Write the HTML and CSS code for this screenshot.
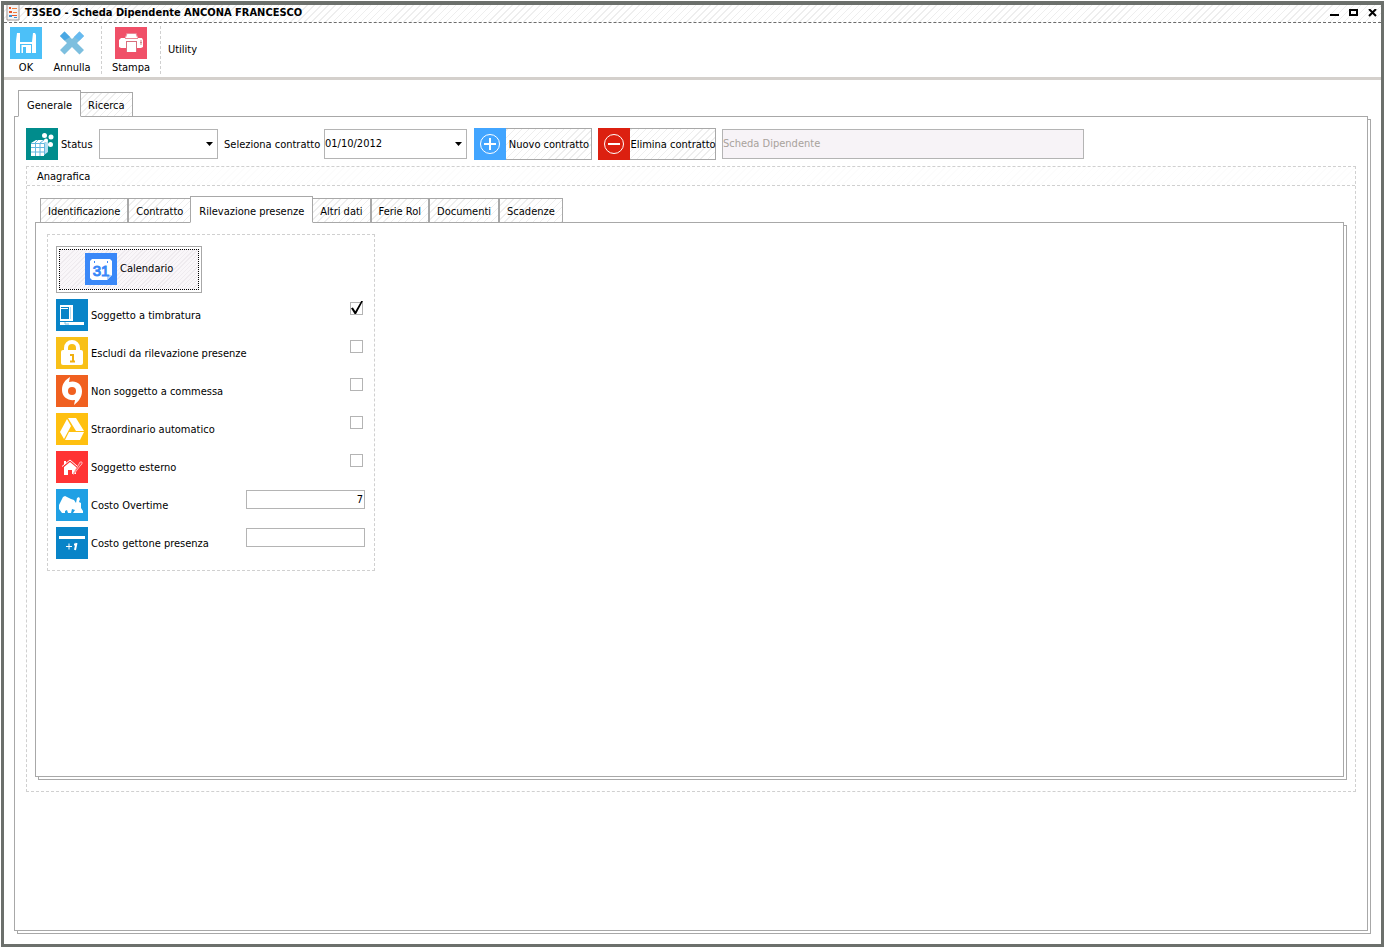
FILE: index.html
```html
<!DOCTYPE html>
<html lang="it">
<head>
<meta charset="utf-8">
<title>T3SEO - Scheda Dipendente</title>
<link rel="stylesheet" href="styles.css">
</head>
<body>
<div class="window">
  <header class="titlebar stripes">
    <svg class="app-icon" width="14" height="16" viewBox="0 0 14 16"><path d="M2 0h10v14H2z" fill="#f4f4f4"/><path d="M1 0v15M13 0v15M1 15h12" stroke="#9d9390" fill="none"/><path d="M3 2h2v2H3zM3 6h3v2H3z" fill="#e8562a"/><path d="M3 10h3v2H3zM8 12h3v1H8z" fill="#3f8fd0"/><path d="M6 3.500h5M7 7.500h4" stroke="#f08040"/><path d="M6 10.500h5" stroke="#e8562a"/></svg>
    <h1 class="title">T3SEO - Scheda Dipendente ANCONA FRANCESCO</h1>
    <button class="win-btn" aria-label="Riduci"><svg width="9" height="8" viewBox="0 0 9 8"><path d="M0 5h9v2H0z"/></svg></button>
    <button class="win-btn" aria-label="Ingrandisci"><svg width="9" height="8" viewBox="0 0 9 8"><path d="M1 1h7v5H1z" fill="none" stroke="#000" stroke-width="2"/></svg></button>
    <button class="win-btn" aria-label="Chiudi"><svg width="9" height="8" viewBox="0 0 9 8"><path d="M1 0l7 7M8 0L1 7" fill="none" stroke="#000" stroke-width="2"/></svg></button>
  </header>

  <nav class="toolbar">
    <button class="tool tool-ok">
      <svg width="32" height="32" viewBox="0 0 32 32"><path fill="#4cc0f8" d="M0 0h32v32H0z"/><path fill="#fff" d="M7 6h3v9h12l1-9h2l1 2v18h-4v-9H10v9H6V14z"/><path fill="#fff" d="M12 18h9v8h-9z"/><path fill="#4cc0f8" d="M13 20h3v6h-3z"/><path fill="#fff" d="M11 18h1v8h-1z" opacity=".5"/></svg>
      OK
    </button>
    <button class="tool">
      <svg width="32" height="32" viewBox="0 0 32 32"><path d="M8.500 4.500l7.500 7.500 7.500-7.500 4.500 4.500-7 7 7 7-4.500 4.500-7.500-7.500-7.500 7.500L4 23l7-7-7-7z" fill="#7dbfdf"/><path d="M8.500 4.500l5.500 5.500-5.500 3.500L4 9z" fill="#4aa8e4"/><path d="M18 10l5.500-5.500L28 9l-4.500 4.500z" fill="#66baf0"/></svg>
      Annulla
    </button>
    <span class="sep"></span>
    <button class="tool">
      <svg width="32" height="32" viewBox="0 0 32 32"><path fill="#f05068" d="M0 0h32v32H0z"/><path fill="#fff" d="M12 6h9l2 5H10zM4 13l2-2h21l1 2v7l-2 1H6l-2-1z"/><path d="M10.500 10.500l1.500-4h9l1.500 4M10 11.500h13" fill="none" stroke="#e88a98"/><path fill="#d8707e" d="M11 14h11v11H11z"/><path fill="#fff" d="M12 15h9v10h-9z"/><path d="M26 13v5M25 15.500h2" stroke="#c88"/></svg>
      Stampa
    </button>
    <span class="sep"></span>
    <button class="tool-text">Utility</button>
  </nav>

  <main class="main">
    <div class="tabs" role="tablist">
      <button class="tab active" role="tab" aria-selected="true">Generale</button>
      <button class="tab stripes" role="tab">Ricerca</button>
    </div>
    <section class="panel panel-outer">
      <div class="filters">
        <svg width="32" height="32" viewBox="0 0 32 32"><path fill="#008c8c" d="M0 0h32v32H0z"/><path fill="#fff" d="M5 15l5-3h10l2 1-4 3v12H5z"/><path fill="#b4def2" d="M18 16l3-4 1 2v10l-4 3z"/><path d="M5 19.500h13M5 24h13M9.500 16v12M14 16v12M18.500 16v11M5 15.500h13l4-3M9 15l3-3M14 15l4-3" stroke="#64b8e0" fill="none"/><g fill="#fff"><circle cx="18.500" cy="7.500" r="2.500"/><circle cx="25" cy="9" r="2.500"/><circle cx="24.500" cy="16.500" r="2.500"/><circle cx="20" cy="12.500" r="2"/></g></svg>
        <label class="status-label" for="status">Status</label>
        <span class="combo combo-status"><select id="status"><option></option></select><svg width="7" height="4" viewBox="0 0 7 4"><path d="M0 0h7L3.500 4z"/></svg></span>
        <label class="contract-label" for="contratto">Seleziona contratto</label>
        <span class="combo combo-contract"><select id="contratto"><option>01/10/2012</option></select><svg width="7" height="4" viewBox="0 0 7 4"><path d="M0 0h7L3.500 4z"/></svg></span>
        <button class="action stripes"><svg width="32" height="32" viewBox="0 0 32 32"><path fill="#42a5ff" d="M0 0h32v32H0z"/><circle cx="16" cy="16" r="9.500" fill="none" stroke="#fff"/><path d="M10 16h12M16 10v12" stroke="#fff" stroke-width="2"/></svg><span>Nuovo contratto</span></button>
        <button class="action stripes"><svg width="32" height="32" viewBox="0 0 32 32"><path fill="#dc2010" d="M0 0h32v32H0z"/><circle cx="16" cy="16" r="9.500" fill="none" stroke="#fff"/><path d="M10 16h12" stroke="#fff" stroke-width="2"/></svg><span>Elimina contratto</span></button>
        <input class="sheet" type="text" value="Scheda Dipendente" aria-label="Scheda" disabled>
      </div>

      <section class="group">
        <h2 class="group-title">Anagrafica</h2>
        <div class="group-body">
          <div class="tabs" role="tablist">
            <button class="tab stripes" role="tab">Identificazione</button>
            <button class="tab stripes" role="tab">Contratto</button>
            <button class="tab active" role="tab" aria-selected="true">Rilevazione presenze</button>
            <button class="tab stripes" role="tab">Altri dati</button>
            <button class="tab stripes" role="tab">Ferie Rol</button>
            <button class="tab stripes" role="tab">Documenti</button>
            <button class="tab stripes" role="tab">Scadenze</button>
          </div>
          <div class="panel panel-inner">
            <form class="form">
              <button class="calendar" type="button"><svg width="32" height="32" viewBox="0 0 32 32"><path fill="#3a88f8" d="M0 0h32v32H0z"/><path fill="#fff" d="M7 6h18l2 2v14l-5 5H7l-2-2V8z"/><path fill="#b8d4fc" d="M22 27v-5h5z"/><path d="M9 9h1M22 9h1" stroke="#3a88f8" stroke-width="2"/><text class="cal-day" x="16" y="23">31</text></svg><span>Calendario</span></button>
              <div class="row">
                <svg width="32" height="32" viewBox="0 0 32 32"><path fill="#0884c8" d="M0 0h32v32H0z"/><path fill="#fff" d="M4 6h9v2H4zM5 9h7v1H5zM4 8h1v12H4zM4 20h9v2H4zM13 6h4v16h-4zM4 23h24v3H4z"/><path d="M14.500 8v12" stroke="#b6dcf0"/><path d="M9 23v2h4" fill="none" stroke="#7cc0e4"/></svg>
                <label for="timbratura">Soggetto a timbratura</label><input id="timbratura" type="checkbox" checked>
              </div>
              <div class="row">
                <svg width="32" height="32" viewBox="0 0 32 32"><path fill="#f8c018" d="M0 0h32v32H0z"/><path d="M10 15v-4a6 6 0 0 1 12 0v4" fill="none" stroke="#fff" stroke-width="4"/><rect x="5" y="13" width="22" height="15" rx="2" fill="#fff"/><path d="M14 18h3v7M14 24.500h5" stroke="#f0b010" stroke-width="2" fill="none"/></svg>
                <label for="escludi">Escludi da rilevazione presenze</label><input id="escludi" type="checkbox">
              </div>
              <div class="row">
                <svg width="32" height="32" viewBox="0 0 32 32"><path fill="#f06020" d="M0 0h32v32H0z"/><path fill="#fff" d="M14 2l-1 5c7-2 13 2 13 9 0 6-3 10-8 14l1-5C12 26 6 22 6 15 6 9 9 5 14 2z"/><circle cx="16" cy="16" r="4" fill="#f06020"/></svg>
                <label for="commessa">Non soggetto a commessa</label><input id="commessa" type="checkbox">
              </div>
              <div class="row">
                <svg width="32" height="32" viewBox="0 0 32 32"><path fill="#ffc010" d="M0 0h32v32H0z"/><path fill="#fff" d="M12 5h8l8 13h-8zM11 6l4 7-7 13-4-7zM13 19h15l-4 8H9z"/></svg>
                <label for="straordinario">Straordinario automatico</label><input id="straordinario" type="checkbox">
              </div>
              <div class="row">
                <svg width="32" height="32" viewBox="0 0 32 32"><path fill="#ff3434" d="M0 0h32v32H0z"/><path fill="#fff" d="M14 11l6 5v7h-4v-4h-4v5H8v-8zM8 10h2v3H8z"/><path d="M6 15.500L14 9l7 6" fill="none" stroke="#fff"/><path d="M17 23l6-10 1-2h2v2l-2 2-6 8z" fill="#ff4c4c" stroke="#ffb0b0"/></svg>
                <label for="esterno">Soggetto esterno</label><input id="esterno" type="checkbox">
              </div>
              <div class="row">
                <svg width="32" height="32" viewBox="0 0 32 32"><path fill="#20a0e4" d="M0 0h32v32H0z"/><path fill="#fff" d="M3 16l4-8 2-1 6 3 3 1 2 3 1-5 2-1 1 2-1 3 2 1v5l2 3v2H17l2-3-3-1-1 4h-3l-1-3-2 1v2H6l-3-4z"/></svg>
                <label for="overtime">Costo Overtime</label><input id="overtime" type="text" value="7">
              </div>
              <div class="row">
                <svg width="32" height="32" viewBox="0 0 32 32"><path fill="#0884c8" d="M0 0h32v32H0z"/><path fill="#fff" d="M3 9h26v3H3z"/><path d="M10 19.500h6M13 16.500v6" stroke="#fff"/><path d="M18 17.500h3M20.500 16l-1.500 7" stroke="#fff" stroke-width="2" fill="none"/></svg>
                <label for="gettone">Costo gettone presenza</label><input id="gettone" type="text">
              </div>
            </form>
          </div>
        </div>
      </section>
    </section>
  </main>
</div>
</body>
</html>
```
FILE: styles.css
```css
* { box-sizing: border-box; }
body {
  margin: 0;
  padding: 1px;
  background: #fff;
  color: #000;
  font: 11px/14px Tahoma, "DejaVu Sans Condensed", "Noto Sans", sans-serif;
}
button, input, select { font: inherit; color: inherit; margin: 0; }
button { padding: 0; border: 0; background: none; cursor: pointer; white-space: nowrap; }
svg { display: block; flex: none; }

.window {
  display: flex;
  flex-direction: column;
  min-height: calc(100vh - 2px);
  border: 3px solid #6c706c;
  border-top-width: 4px;
}
.stripes {
  background: repeating-linear-gradient(135deg, #fff 0 4px, #eee 4px 5px);
}

.titlebar {
  display: flex;
  align-items: center;
  height: 18px;
  padding: 0 4px 2px 2px;
  border-bottom: 1px dashed #6c6c6c;
}
.title { flex: 1; margin: 0 0 0 5px; font-size: 11px; line-height: 14px; }
.win-btn { width: 9px; margin-left: 10px; }

.toolbar {
  display: flex;
  height: 57px;
  padding-left: 2px;
  border-bottom: 3px solid #d4d0cc;
}
.tool {
  display: flex;
  flex-direction: column;
  align-items: center;
  gap: 2px;
  width: 52px;
  padding-top: 4px;
}
.tool-ok { width: 40px; }
.tool-text { padding: 0 4px; }
.sep { margin: 3px 3px; border-left: 1px dashed #d0d0d0; }

.main {
  flex: 1;
  display: flex;
  flex-direction: column;
  padding: 10px 13px 13px 10px;
}
.tabs {
  display: flex;
  align-items: flex-end;
  position: relative;
  margin-bottom: -1px;
  padding-left: 5px;
}
.tab {
  height: 25px;
  padding: 2px 7px 0;
  border: 1px solid #a8a8a8;
}
.tab.active {
  position: relative;
  height: 27px;
  margin: 0 -1px;
  padding: 4px 8px 0;
  background: #fff;
  border-bottom-color: #fff;
}
.panel {
  flex: 1;
  background: #fff;
  border: 1px solid #a8a8a8;
  box-shadow: 3px 3px 0 -1px #fff, 3px 3px 0 0 #a8a8a8;
}
.panel-outer {
  display: flex;
  flex-direction: column;
  padding: 11px 11px 138px;
}

.filters { display: flex; align-items: center; height: 32px; }
.status-label { width: 38px; margin-left: 3px; padding-top: 2px; }
.contract-label { width: 94px; margin: 0 6px; padding-top: 2px; white-space: nowrap; }
.combo { position: relative; height: 30px; }
.combo-status { width: 119px; }
.combo-contract { width: 143px; }
.combo select {
  width: 100%;
  height: 100%;
  padding: 0 16px 1px 0;
  appearance: none;
  background: #fff;
  border: 1px solid #b4b4b4;
  border-radius: 0;
}
.combo svg { position: absolute; right: 5px; top: 13px; pointer-events: none; }
.action {
  display: flex;
  align-items: center;
  width: 118px;
  height: 32px;
  margin-left: 7px;
  box-shadow: inset 0 0 0 1px #a8a8a8;
}
.action + .action { margin-left: 6px; }
.action span { flex: 1; padding-top: 1px; text-align: center; }
.sheet {
  width: 362px;
  height: 30px;
  margin-left: 6px;
  padding: 0 0 2px;
  border: 1px solid #b4b4b4;
  background: #f7f3f7;
  color: #a8a29c;
}

.group {
  flex: 1;
  display: flex;
  flex-direction: column;
  margin-top: 6px;
  border: 1px dashed #d0d0d0;
}
.group-title {
  height: 19px;
  margin: 0;
  padding: 3px 10px 0;
  border-bottom: 1px dashed #d0d0d0;
  background: repeating-linear-gradient(135deg, #fff 0 4px, #fcfcfc 4px 5px);
  font-size: 11px;
  font-weight: normal;
}
.group-body {
  flex: 1;
  display: flex;
  flex-direction: column;
  padding: 10px 11px 14px 8px;
}
.panel-inner { padding: 11px; }

.form {
  display: flex;
  flex-direction: column;
  gap: 6px;
  width: 328px;
  padding: 11px 9px 11px 8px;
  border: 1px dashed #d0d0d0;
}
.calendar {
  display: flex;
  align-items: center;
  gap: 3px;
  width: 146px;
  height: 47px;
  padding: 0 0 2px 28px;
  border: 1px solid #a8a8a8;
  outline: 1px dotted #000;
  outline-offset: -4px;
  background: repeating-linear-gradient(135deg, #f9f6f9 0 2px, #efebef 2px 3px);
  box-shadow: inset 0 0 0 2px #fff;
}
.cal-day { font: 15px "Liberation Sans", Arial, sans-serif; fill: #3a88f8; stroke: #3a88f8; text-anchor: middle; }
.row { display: flex; align-items: center; height: 32px; }
.row label { flex: 1; margin-left: 3px; padding-top: 2px; }
.row input { align-self: flex-start; border: 1px solid #b4b4b4; border-radius: 0; background: #fff; }
.row input[type="checkbox"] {
  appearance: none;
  position: relative;
  width: 13px;
  height: 13px;
  margin: 3px 2px 0 0;
}
.row input[type="checkbox"]:checked::after {
  content: "";
  position: absolute;
  left: 0;
  top: -2px;
  width: 12px;
  height: 13px;
  background: #000;
  clip-path: polygon(0 55%, 16% 50%, 36% 78%, 85% 0, 100% 0, 42% 100%, 30% 100%);
}
.row input[type="text"] {
  width: 119px;
  height: 19px;
  margin-top: 1px;
  padding: 0 1px;
  text-align: right;
}
```
